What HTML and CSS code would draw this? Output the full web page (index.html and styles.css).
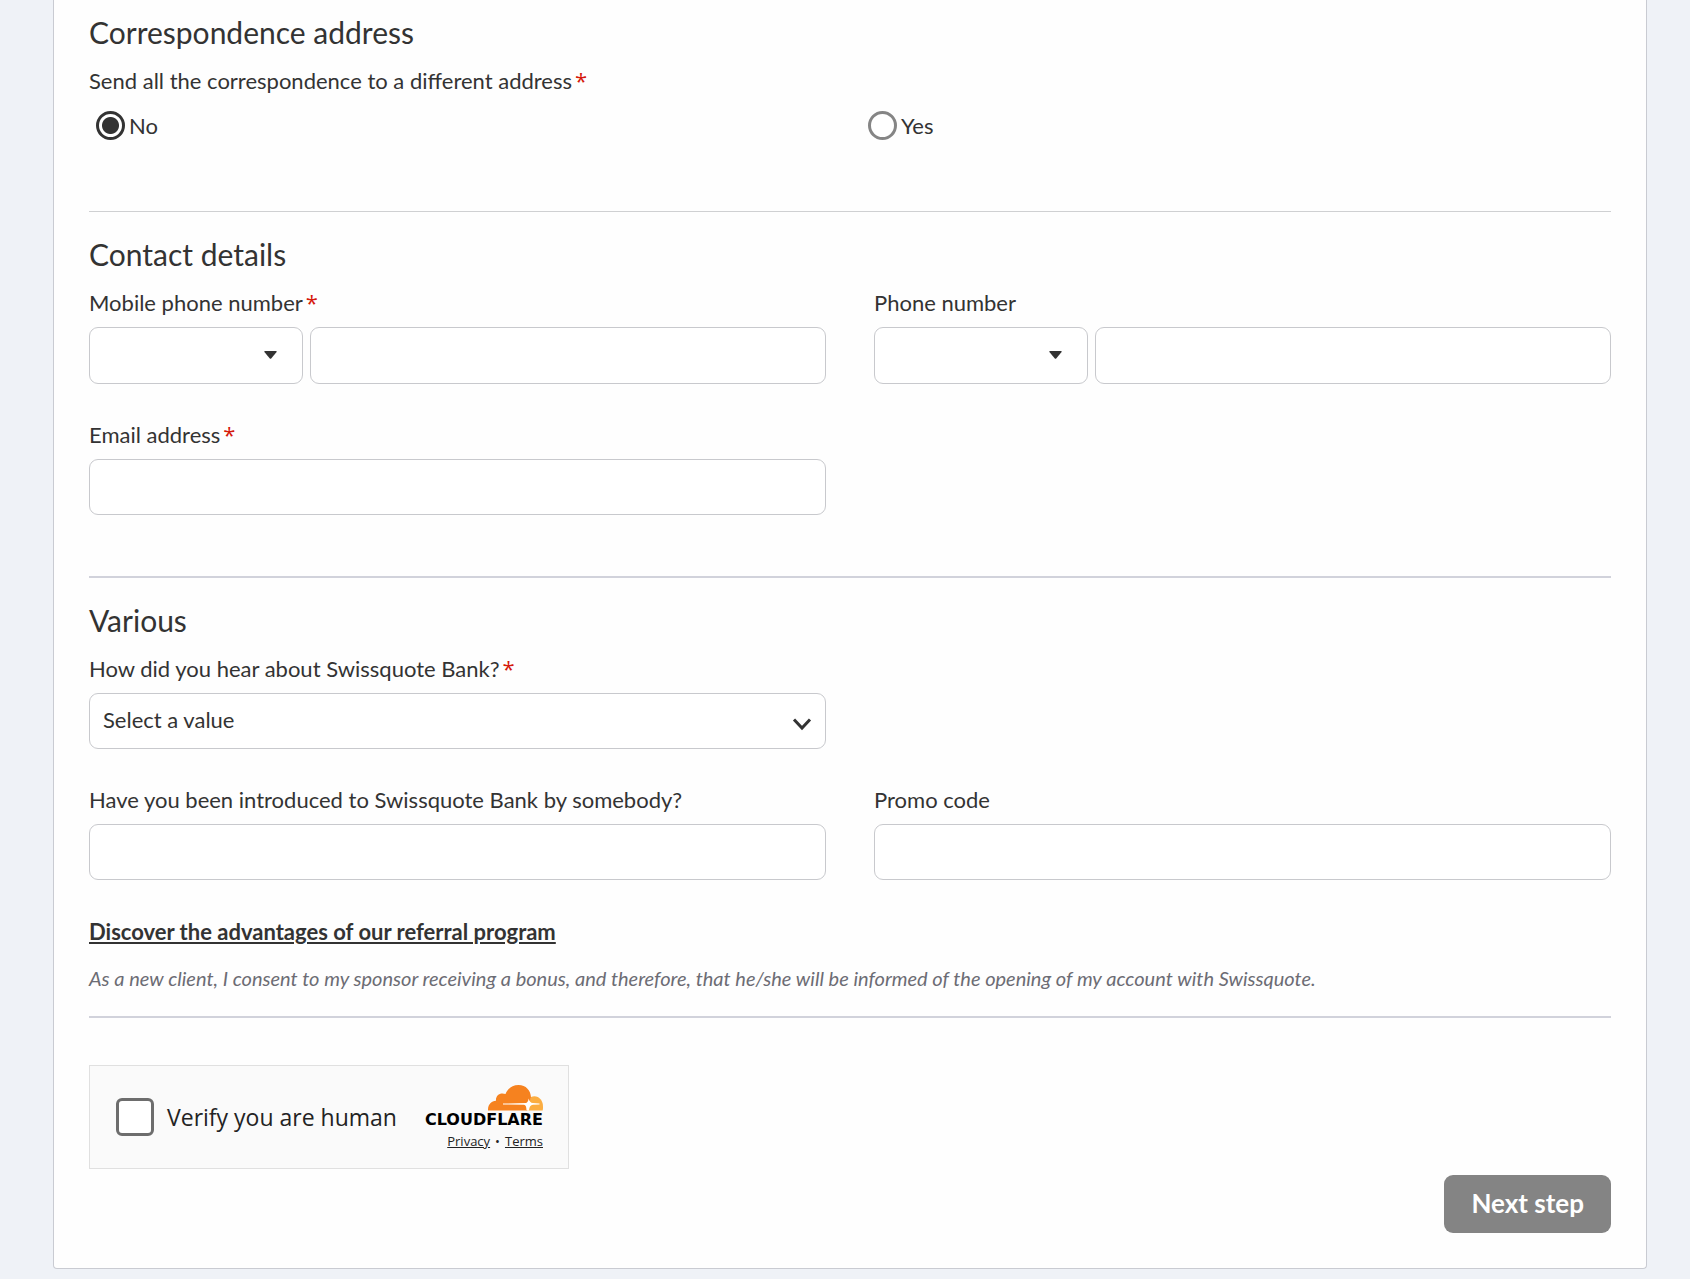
FILE: index.html
```html
<!DOCTYPE html>
<html lang="en">
  <head>
    <meta charset="utf-8">
    <title>Account opening</title>
    <meta name="viewport" content="width=device-width, initial-scale=1.0">
    <link rel="stylesheet" href="styles.css">
  </head>
  <body>
    <form class="card">
      <section class="section">
        <h2>Correspondence address</h2>
        <fieldset class="choice">
          <legend class="label">Send all the correspondence to a different address<span class="required">*</span></legend>
          <div class="radios">
            <label class="radio"><input type="radio" name="different_address" value="no" checked>No</label>
            <label class="radio"><input type="radio" name="different_address" value="yes">Yes</label>
          </div>
        </fieldset>
      </section>

      <section class="section">
        <h2>Contact details</h2>
        <div class="grid">
          <div class="field">
            <label class="label" for="mobile">Mobile phone number<span class="required">*</span></label>
            <div class="phone">
              <div class="select">
                <select class="control" aria-label="Mobile country code"><option></option></select>
                <svg class="caret" width="13" height="8" viewBox="0 0 13 8"><path d="M1 0h11q1 0 .6 1L7.2 7.4q-.7.8-1.4 0L.4 1Q0 0 1 0z" fill="currentColor"/></svg>
              </div>
              <input class="control" type="tel" id="mobile">
            </div>
          </div>
          <div class="field">
            <label class="label" for="phone">Phone number</label>
            <div class="phone">
              <div class="select">
                <select class="control" aria-label="Phone country code"><option></option></select>
                <svg class="caret" width="13" height="8" viewBox="0 0 13 8"><path d="M1 0h11q1 0 .6 1L7.2 7.4q-.7.8-1.4 0L.4 1Q0 0 1 0z" fill="currentColor"/></svg>
              </div>
              <input class="control" type="tel" id="phone">
            </div>
          </div>
          <div class="field">
            <label class="label" for="email">Email address<span class="required">*</span></label>
            <input class="control" type="email" id="email">
          </div>
        </div>
      </section>

      <section class="section section-last">
        <h2>Various</h2>
        <div class="grid">
          <div class="field">
            <label class="label" for="source">How did you hear about Swissquote Bank?<span class="required">*</span></label>
            <div class="select">
              <select class="control" id="source"><option>Select a value</option></select>
              <svg class="chevron" width="20" height="14" viewBox="0 0 20 14"><path d="M2 2.5l8 8.5 8-8.5" fill="none" stroke="currentColor" stroke-width="3"/></svg>
            </div>
          </div>
          <div class="field field-left">
            <label class="label" for="sponsor">Have you been introduced to Swissquote Bank by somebody?</label>
            <input class="control" type="text" id="sponsor">
          </div>
          <div class="field">
            <label class="label" for="promo">Promo code</label>
            <input class="control" type="text" id="promo">
          </div>
        </div>
        <a class="referral" href="#">Discover the advantages of our referral program</a>
        <p class="note">As a new client, I consent to my sponsor receiving a bonus, and therefore, that he/she will be informed of the opening of my account with Swissquote.</p>
      </section>

      <div class="captcha">
        <label class="verify"><input type="checkbox">Verify you are human</label>
        <div class="brand">
          <svg class="cloud" width="55" height="26" viewBox="0 0 55 26">
            <path d="M43 12c6.500-2.500 12 2.500 12 9.500 0 1.500 0 3-.4 4H38z" fill="#fbad41"/>
            <path d="M0 25.500c-.3-5.500 3-9.700 8-9.800C7.500 10.500 12 7 17.500 9 20 3 24.500 0 30.500 0 38 0 42.800 5.500 43 12.500l-2 6-2 7z" fill="#f6821f"/>
            <path d="M15 18.500l23-.4c1.500-.6 2.200-2.100 2.700-4.600.8 3 1.800 4.200 4.300 4.600l6.500.4v.9l-6.500.4c-2.500.5-3.500 1.700-4 5.700h-2.500c-.1-4-.8-5.200-2.500-5.700l-21-.4z" fill="#fff"/>
          </svg>
          <span class="wordmark">CLOUDFLARE</span>
          <div class="terms"><a href="#">Privacy</a><span>•</span><a href="#">Terms</a></div>
        </div>
      </div>

      <div class="actions">
        <button class="next" type="button">Next step</button>
      </div>
    </form>
  </body>
</html>
```

FILE: styles.css
```css
* {
  box-sizing: border-box;
}

body {
  margin: 0;
  padding: 0 43px 10px 53px;
  background: #eff2f7;
  color: #333333;

  font-family: Lato, "Open Sans", sans-serif;
  font-size: 22px;
  line-height: 28px;
}

.card {
  padding: 14px 35px 35px;
  background: #fefefe;
  border: 1px solid #c9cbd2;
  border-top: 0;
  border-radius: 0 0 4px 4px;
}

.section {
  margin-bottom: 24px;
  padding-bottom: 61px;
  border-bottom: 2px solid #d1d2db;
}

.section:first-child {
  padding-bottom: 71px;
  border-bottom: 1px solid #cfd0d2;
}

.section-last {
  margin-bottom: 47px;
  padding-bottom: 24px;
}

h2 {
  margin: 0 0 17px;
  font-size: 30px;
  font-weight: 400;
  line-height: 36px;
}

.label {
  display: block;
  padding: 0;
}

.required {
  margin-left: 3px;
  color: #d5180b;
  font-family: "Open Sans", sans-serif;
  line-height: 1;
}

.choice {
  margin: 0;
  padding: 0;
  border: 0;
}

/* second option starts slightly left of the second column */
.radios {
  display: grid;
  grid-template-columns: 1fr 1fr;
  margin: 16px -22px 0 0;
}

.radio {
  display: flex;
  align-items: center;
  gap: 4px;
  padding-left: 7px;
}

.radio input {
  appearance: none;
  width: 29px;
  height: 29px;
  margin: 0;
  border: 3px solid #858585;
  border-radius: 50%;
  background: #ffffff;
}

.radio input:checked {
  border-color: #333333;
  background: radial-gradient(circle, #333333 8px, #ffffff 9px);
}

.grid {
  display: grid;
  grid-template-columns: 1fr 1fr;
  gap: 37px 48px;
}

.field {
  display: flex;
  flex-direction: column;
  gap: 10px;
}

.field-left {
  grid-column: 1;
}

.control {
  display: block;
  width: 100%;
  height: 56px;
  padding: 0 13px 3px;
  border: 1px solid #c8c9cd;
  border-radius: 9px;
  background: #ffffff;
  color: inherit;
  font: inherit;
  appearance: none;
}

.phone {
  display: grid;
  grid-template-columns: 214px 1fr;
  gap: 7px;
}

.phone .control {
  height: 57px;
}

.select {
  position: relative;
}

.caret,
.chevron {
  position: absolute;
  top: 24px;
  right: 26px;
  pointer-events: none;
}

.chevron {
  right: 14px;
}

.referral {
  display: table;
  margin-top: 38px;
  color: inherit;
  font-weight: 700;
}

.note {
  margin: 18px 0 0;
  color: #6c6c74;
  font-size: 20px;
  font-style: italic;
}

.captcha {
  display: flex;
  align-items: center;
  justify-content: space-between;
  width: 480px;
  height: 104px;
  padding: 0 25px 0 26px;
  border: 1px solid #e0e0e0;
  background: #fafafa;
  color: #232323;
  font-family: "Open Sans", "Noto Sans", sans-serif;
}

.verify {
  display: flex;
  align-items: center;
  gap: 13px;
  font-size: 23px;
}

.verify input {
  appearance: none;
  width: 38px;
  height: 38px;
  margin: 0;
  border: 3px solid #6d6d6d;
  border-radius: 6px;
  background: #ffffff;
}

.brand {
  display: flex;
  flex-direction: column;
  align-items: flex-end;
  margin-top: 4px;
}

.wordmark {
  color: #000000;
  font-family: "DejaVu Sans", sans-serif;
  font-size: 16px;
  font-weight: 700;
  line-height: 18px;
}

.terms {
  display: flex;
  gap: 5px;
  font-size: 13px;
  line-height: 24px;
}

.terms a {
  color: inherit;
}

.actions {
  display: flex;
  justify-content: flex-end;
  margin-top: 6px;
}

.next {
  height: 58px;
  padding: 0 27px 2px;
  border: 0;
  border-radius: 9px;
  background: #848484;
  color: #ffffff;
  font: inherit;
  font-size: 26px;
  font-weight: 700;
}
```
